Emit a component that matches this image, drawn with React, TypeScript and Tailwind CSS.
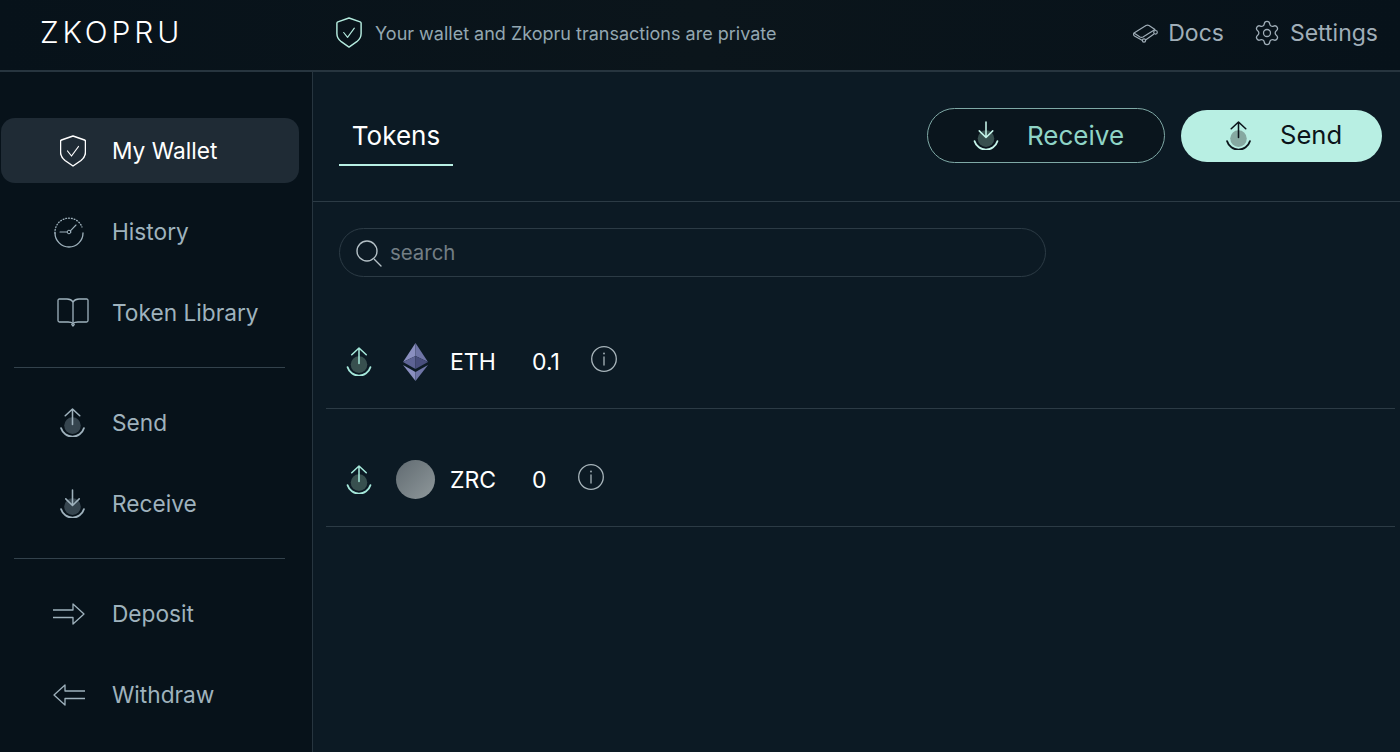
import { Settings } from 'lucide-react'

const fontStack = { fontFamily: 'Inter, "Liberation Sans", sans-serif' }

type IconProps = { className?: string }

function ShieldIcon({ className }: IconProps) {
  return (
    <svg viewBox="0 0 26 32" fill="none" stroke="currentColor" strokeWidth="1.5" strokeLinejoin="round" strokeLinecap="round" className={className}>
      <path d="M13 1 L24.5 5 Q25.5 5.4 25.5 6.5 V17 Q25.5 22 21 25.5 L13 31 L5 25.5 Q0.5 22 0.5 17 V6.5 Q0.5 5.4 1.5 5 Z" />
      <path d="M7.5 16 L11.5 21 L18.5 11.5" strokeWidth="1.2" />
    </svg>
  )
}

function ClockIcon({ className }: IconProps) {
  return (
    <svg viewBox="0 0 32 32" fill="none" stroke="currentColor" strokeLinecap="round" className={className}>
      <path d="M2 17 A14 14 0 1 0 30 17" strokeWidth="1.3" />
      <path d="M2 17 A14 14 0 0 1 29 11" strokeWidth="1.3" strokeDasharray="0.8 2" />
      <circle cx="16" cy="16" r="1.8" strokeWidth="1" />
      <path d="M7 16 H14 M17.4 14.8 L23 9" strokeWidth="1.1" />
    </svg>
  )
}

function BookIcon({ className }: IconProps) {
  return (
    <svg viewBox="0 0 32 29" fill="none" stroke="currentColor" strokeWidth="1.3" strokeLinejoin="round" className={className}>
      <path d="M16 4 Q14 1 10 1 H2.5 Q1 1 1 2.5 V22.5 Q1 24 2.5 24 H11 Q14.5 24 16 25.5 Q17.5 24 21 24 H29.5 Q31 24 31 22.5 V2.5 Q31 1 29.5 1 H22 Q18 1 16 4 Z" />
      <path d="M16 4 V25.5 M14.5 26 L16 28 L17.5 26" />
    </svg>
  )
}

function SendIcon({ className, fill }: IconProps & { fill: string }) {
  return (
    <svg viewBox="0 0 24 28" fill="none" stroke="currentColor" strokeLinecap="round" strokeLinejoin="round" className={className}>
      <circle cx="12" cy="17" r="8" className={fill} stroke="none" />
      <path d="M12 1 V16 M5 7.5 L12 1 L19 7.5" strokeWidth="1.5" />
      <path d="M1 19.5 A11.5 11.5 0 0 0 23 19.5" strokeWidth="1.8" />
    </svg>
  )
}

function ReceiveIcon({ className, fill }: IconProps & { fill: string }) {
  return (
    <svg viewBox="0 0 24 28" fill="none" stroke="currentColor" strokeLinecap="round" strokeLinejoin="round" className={className}>
      <circle cx="12" cy="17" r="8" className={fill} stroke="none" />
      <path d="M12 1 V16 M5.5 9.5 L12 16 L18.5 9.5" strokeWidth="1.5" />
      <path d="M1 19.5 A11.5 11.5 0 0 0 23 19.5" strokeWidth="1.8" />
    </svg>
  )
}

function DepositIcon({ className }: IconProps) {
  return (
    <svg viewBox="0 0 32 22" fill="none" stroke="currentColor" strokeWidth="1.3" strokeLinejoin="round" className={className}>
      <path d="M0 7 H20 V1 L31 11 L20 21 V14.5 H0" />
    </svg>
  )
}

function WithdrawIcon({ className }: IconProps) {
  return (
    <svg viewBox="0 0 32 22" fill="none" stroke="currentColor" strokeWidth="1.3" strokeLinejoin="round" className={className}>
      <path d="M32 7 H12 V1 L1 11 L12 21 V14.5 H32" />
    </svg>
  )
}

function DocsIcon({ className }: IconProps) {
  return (
    <svg viewBox="0 0 25 19" fill="none" stroke="currentColor" strokeWidth="1.2" strokeLinejoin="round" className={className}>
      <path d="M1 9 L13 1.5 Q14.5 0.8 16 1.5 L22 5.5 L10 13 Q8.5 13.8 7 13 Z" />
      <path d="M1 9 Q0 11 1.5 12 L9.5 16.5 M12.5 16 L21 10" />
      <circle cx="22.5" cy="8.3" r="1.8" />
      <circle cx="11" cy="16.5" r="1.6" />
    </svg>
  )
}

function SearchIcon({ className }: IconProps) {
  return (
    <svg viewBox="0 0 26 28" fill="none" stroke="currentColor" strokeWidth="1.4" strokeLinecap="round" className={className}>
      <circle cx="11" cy="11" r="10" />
      <path d="M18.5 19.5 L25 26" />
    </svg>
  )
}

function InfoIcon({ className }: IconProps) {
  return (
    <svg viewBox="0 0 26 26" fill="none" stroke="currentColor" strokeLinecap="round" className={className}>
      <circle cx="13" cy="13" r="12.3" strokeWidth="1.3" />
      <path d="M13 11 V19" strokeWidth="1.3" />
      <circle cx="13" cy="7.5" r="0.9" fill="currentColor" stroke="none" />
    </svg>
  )
}

function EthIcon() {
  return (
    <svg viewBox="0 0 25 38" className="w-[25px] h-[38px]">
      <polygon points="12.5,0 0,19 12.5,13" fill="#8a8fc0" />
      <polygon points="12.5,0 25,19 12.5,13" fill="#6f75a6" />
      <polygon points="12.5,13 0,19 12.5,26" fill="#5d6394" />
      <polygon points="12.5,13 25,19 12.5,26" fill="#484e7c" />
      <polygon points="0,22 12.5,38 12.5,29" fill="#8a8fc0" />
      <polygon points="25,22 12.5,38 12.5,29" fill="#6f75a6" />
    </svg>
  )
}

function NavItem({ icon, label, active }: { icon: React.ReactNode; label: string; active?: boolean }) {
  return (
    <div className={`flex items-center h-[65px] rounded-[14px] ml-px mr-[13px] ${active ? 'bg-[#1f2b35] text-white' : 'text-[#9fb2bd]'}`}>
      <div className="w-[111px] flex justify-center pl-[40px] pr-[8px] shrink-0">{icon}</div>
      <span className="text-[22.7px] leading-none mt-[2px]">{label}</span>
    </div>
  )
}

function TokenRow({ icon, name, amount }: { icon: React.ReactNode; name: string; amount: string }) {
  return (
    <div className="flex items-center h-[118px] pt-[24px] pl-[20px] border-b border-[#2c3b45]">
      <SendIcon className="w-[26px] h-[29px] text-[#a5e8da] -mt-[1px]" fill="fill-[#38504f]" />
      <div className="w-[70px] ml-[8px] flex justify-center">{icon}</div>
      <span className="w-[82px] text-[23px] text-white leading-none mt-[2px]">{name}</span>
      <span className="text-[23px] text-white leading-none mt-[2px]">{amount}</span>
      <InfoIcon className="w-[26px] h-[26px] ml-[31px] -mt-[6px] text-[#a7b4ba]" />
    </div>
  )
}

export default function App() {
  return (
    <div className="w-[1400px] h-[752px] overflow-hidden flex flex-col bg-[#0c1a24]" style={fontStack}>
      {/* Header */}
      <header className="h-[72px] shrink-0 flex items-center bg-gradient-to-r from-[#07121a] via-[#0b151b] to-[#07121a] border-b-2 border-[#27353f] pb-[4px]">
        <span className="ml-[40px] w-[296px] -mt-[2px] text-[30px] font-light tracking-[0.13em] text-white leading-none">ZKOPRU</span>
        <ShieldIcon className="w-[26px] h-[31px] -mt-[2px] text-[#b4ebde]" />
        <span className="ml-[13px] text-[18px] text-[#93a7b1]">Your wallet and Zkopru transactions are private</span>
        <div className="ml-auto flex items-center pr-[22px] text-[#a0aeb8]">
          <DocsIcon className="w-[25px] h-[19px]" />
          <span className="ml-[10px] text-[23px] leading-none">Docs</span>
          <Settings size={28} strokeWidth={1.1} className="ml-[29px]" />
          <span className="ml-[9px] text-[23px] leading-none">Settings</span>
        </div>
      </header>

      <div className="flex flex-1 min-h-0">
        {/* Sidebar */}
        <aside className="w-[313px] shrink-0 bg-[#07121a] border-r border-[#27353f] pt-[46px]">
          <div className="flex flex-col gap-[16px]">
            <NavItem active label="My Wallet" icon={<ShieldIcon className="w-[26px] h-[32px]" />} />
            <NavItem label="History" icon={<ClockIcon className="w-[32px] h-[32px] -ml-[8px]" />} />
            <NavItem label="Token Library" icon={<BookIcon className="w-[32px] h-[29px]" />} />
          </div>
          <div className="ml-[14px] mr-[27px] my-[22px] border-t border-[#33424c]" />
          <div className="flex flex-col gap-[16px]">
            <NavItem label="Send" icon={<SendIcon className="w-[25px] h-[29px]" fill="fill-[#36454f]" />} />
            <NavItem label="Receive" icon={<ReceiveIcon className="w-[25px] h-[29px]" fill="fill-[#36454f]" />} />
          </div>
          <div className="ml-[14px] mr-[27px] my-[22px] border-t border-[#33424c]" />
          <div className="flex flex-col gap-[16px]">
            <NavItem label="Deposit" icon={<DepositIcon className="w-[32px] h-[22px] -ml-[7px]" />} />
            <NavItem label="Withdraw" icon={<WithdrawIcon className="w-[32px] h-[22px] -ml-[7px]" />} />
          </div>
        </aside>

        {/* Main */}
        <main className="flex-1 min-w-0">
          <div className="h-[130px] border-b border-[#2c3b45] flex items-center pl-[26px] pr-[18px]">
            <div className="w-[114px] h-[58px] border-b-2 border-[#b8efe3] flex items-center justify-center text-[26px] text-white self-end mb-[35px] pb-[2px]">Tokens</div>
            <div className="ml-auto flex items-center gap-[16px] -mt-[2px]">
              <button className="w-[238px] h-[55px] rounded-full border border-[#7fa9a6] bg-[#0a151d] flex items-center pl-[45px] text-[#8fd4c6]">
                <ReceiveIcon className="w-[26px] h-[29px] text-[#c6f5ea]" fill="fill-[#38504f]" />
                <span className="ml-[28px] text-[26px]">Receive</span>
              </button>
              <button className="w-[201px] h-[52px] rounded-full bg-[#b8efe3] flex items-center pl-[45px] text-[#0b141a]">
                <SendIcon className="w-[25px] h-[29px]" fill="fill-[#86a9a1]" />
                <span className="ml-[29px] text-[25.6px]">Send</span>
              </button>
            </div>
          </div>

          <div className="pl-[26px] pt-[26px]">
            <div className="w-[707px] h-[49px] rounded-full border border-[#2c3b45] flex items-center pl-[16px]">
              <SearchIcon className="w-[26px] h-[28px] text-[#b4c0c6] mt-[2px]" />
              <span className="ml-[8px] text-[20.4px] text-[#737e84] mt-[1px]">search</span>
            </div>
          </div>

          <div className="ml-[13px] mr-[5px] mt-[14px]">
            <TokenRow icon={<EthIcon />} name="ETH" amount="0.1" />
            <TokenRow
              icon={<div className="w-[39px] h-[39px] rounded-full bg-gradient-to-br from-[#616b71] to-[#8f989b]" />}
              name="ZRC"
              amount="0"
            />
          </div>
        </main>
      </div>
    </div>
  )
}
